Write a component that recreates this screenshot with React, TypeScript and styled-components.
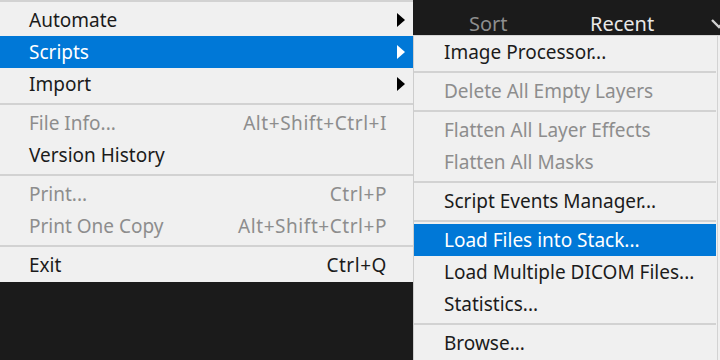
import React from "react";
import styled, { createGlobalStyle } from "styled-components";

const Global = createGlobalStyle`
  html, body { margin: 0; padding: 0; background: #1b1b1b; }
  body { font-family: "Noto Sans", "Open Sans", sans-serif; }
`;

const Screen = styled.div`
  width: 720px;
  height: 360px;
  overflow: hidden;
  display: flex;
  align-items: flex-start;
  background: #1b1b1b;
`;

const MainMenu = styled.div`
  width: 413px;
  flex: none;
  margin-top: -3px;
  padding-bottom: 1px;
  background: #f0f0f0;
`;

const RightColumn = styled.div`
  flex: 1;
  height: 360px;
  display: flex;
  flex-direction: column;
`;

const TopBar = styled.div`
  height: 35px;
  flex: none;
  display: flex;
  align-items: center;
  padding: 12px 0 0 56px;
  box-sizing: border-box;
  font-size: 20px;
  white-space: nowrap;
  background: #1b1b1b;
`;

const SortLabel = styled.span`
  width: 121px;
  color: #8e8e8e;
`;

const RecentLabel = styled.span`
  flex: 1;
  color: #e8e8e8;
`;

const Chevron = styled.svg`
  flex: none;
  margin-right: -8px;
`;

const SubMenu = styled.div`
  flex: 1;
  background: #f0f0f0;
  border-left: 1px solid #cdcdcd;
  border-top: 1px solid #d6d6d6;
  padding-right: 2px;
  display: flex;
`;

const SubList = styled.div`
  flex: 1;
  border-right: 1px solid #d3d3d3;
  padding-right: 1px;
`;

const Item = styled.div<{ $active?: boolean; $disabled?: boolean; $indent: number; $right: number }>`
  height: 32px;
  display: flex;
  align-items: center;
  padding-left: ${(p) => p.$indent}px;
  padding-right: ${(p) => p.$right}px;
  font-size: 19px;
  white-space: nowrap;
  background: ${(p) => (p.$active ? "#0078d7" : "transparent")};
  color: ${(p) => (p.$active ? "#ffffff" : p.$disabled ? "#8d8d8d" : "#1b1b1b")};
`;

const Label = styled.span`
  flex: 1;
`;

const Shortcut = styled.span`
  letter-spacing: 0.55px;
`;

const ArrowSlot = styled.span`
  width: 18px;
  display: flex;
  justify-content: flex-end;
`;

const Arrow = styled.span<{ $light?: boolean }>`
  width: 0;
  height: 0;
  border-top: 7px solid transparent;
  border-bottom: 7px solid transparent;
  border-left: 8px solid ${(p) => (p.$light ? "#ffffff" : "#000000")};
`;

const Separator = styled.div`
  height: 7px;
  display: flex;
  align-items: center;
  &::before {
    content: "";
    flex: 1;
    height: 2px;
    background: #d2d2d2;
  }
`;

type Entry =
  | { sep: true }
  | { label: string; shortcut?: string; sub?: boolean; active?: boolean; disabled?: boolean };

const mainEntries: Entry[] = [
  { sep: true },
  { label: "Automate", sub: true },
  { label: "Scripts", sub: true, active: true },
  { label: "Import", sub: true },
  { sep: true },
  { label: "File Info...", shortcut: "Alt+Shift+Ctrl+I", disabled: true },
  { label: "Version History" },
  { sep: true },
  { label: "Print...", shortcut: "Ctrl+P", disabled: true },
  { label: "Print One Copy", shortcut: "Alt+Shift+Ctrl+P", disabled: true },
  { sep: true },
  { label: "Exit", shortcut: "Ctrl+Q" },
];

const subEntries: Entry[] = [
  { label: "Image Processor..." },
  { sep: true },
  { label: "Delete All Empty Layers", disabled: true },
  { sep: true },
  { label: "Flatten All Layer Effects", disabled: true },
  { label: "Flatten All Masks", disabled: true },
  { sep: true },
  { label: "Script Events Manager..." },
  { sep: true },
  { label: "Load Files into Stack...", active: true },
  { label: "Load Multiple DICOM Files..." },
  { label: "Statistics..." },
  { sep: true },
  { label: "Browse..." },
];

export default function App() {
  return (
    <>
      <Global />
      <Screen>
        <MainMenu>
          {mainEntries.map((e, i) =>
            "sep" in e ? (
              <Separator key={i} />
            ) : (
              <Item key={i} $indent={29} $right={8} $active={e.active} $disabled={e.disabled}>
                <Label>{e.label}</Label>
                {e.shortcut && <Shortcut>{e.shortcut}</Shortcut>}
                <ArrowSlot>{e.sub && <Arrow $light={e.active} />}</ArrowSlot>
              </Item>
            )
          )}
        </MainMenu>
        <RightColumn>
          <TopBar>
            <SortLabel>Sort</SortLabel>
            <RecentLabel>Recent</RecentLabel>
            <Chevron width="18" height="12" viewBox="0 0 18 12">
              <polyline points="2,2 9,9 16,2" fill="none" stroke="#d0d0d0" strokeWidth="2.4" />
            </Chevron>
          </TopBar>
          <SubMenu>
            <SubList>
              {subEntries.map((e, i) =>
                "sep" in e ? (
                  <Separator key={i} />
                ) : (
                  <Item key={i} $indent={30} $right={8} $active={e.active} $disabled={e.disabled}>
                    <Label>{e.label}</Label>
                  </Item>
                )
              )}
            </SubList>
          </SubMenu>
        </RightColumn>
      </Screen>
    </>
  );
}
